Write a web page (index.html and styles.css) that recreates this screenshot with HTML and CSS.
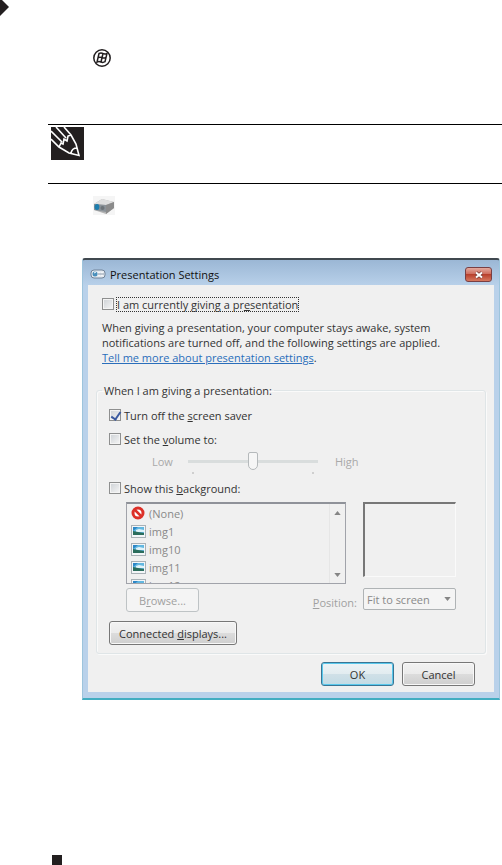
FILE: index.html
```html
<!DOCTYPE html>
<html lang="en">
<head>
    <meta charset="utf-8" />
    <title>Presentation Settings</title>
    <link rel="stylesheet" href="styles.css">
</head>
<body>
    <svg class="marker" viewBox="0 0 9 16"><path d="M0 0h2l7 7-9 9z" /></svg>

    <svg class="start_icon" viewBox="0 0 18 18">
        <circle cx="9" cy="9" r="8.2" />
        <path d="M6 4.500q2-1 4 0 2 .9 4-.2l-2 8.400q-2 1.200-4 .3-2-1-4 0zM10 4.500l-2 8.500M5 8.700q2-1 4 0 2 .9 4-.2" />
    </svg>

    <div class="note">
        <svg class="pencil" viewBox="0 0 33 33">
            <rect width="33" height="33" />
            <path d="M0 12L8 20 18 26 28 28.500 25 17 20 8 13 0M8 20L10 16 12 17 13 12 16 14 17 9 20 8M0 4L11 15M5 0L15 11M20 26q1-5 6-5" />
        </svg>
    </div>

    <svg class="projector" viewBox="0 0 22 19">
        <rect width="22" height="19" fill="#f5f5f5" />
        <path d="M1 8L9 3 21 6 21 12 13 18 1 14z" fill="#b4b4b4" />
        <path d="M1 8L9 3 21 6 13 9z" fill="#dedede" />
        <path d="M13 9L21 6V12L13 18z" fill="#8b8b8b" />
        <path d="M1 8L13 9V16L1 14z" fill="#8b9298" />
        <ellipse cx="4" cy="11" rx="2.400" ry="3" fill="#1d7eae" />
        <circle cx="9.500" cy="12" r="2" fill="#6c7378" />
    </svg>

    <form class="window" onsubmit="return false">
        <div class="titlebar">
            <svg class="title_icon" viewBox="0 0 16 11">
                <rect x="1" y="1" width="14" height="8" rx="3" fill="#e5eaf0" stroke="#718398" />
                <circle cx="5" cy="5" r="2.500" fill="#4a8fbb" />
                <path d="M4 4l2-1M9 3v4M12 3v4" stroke="#fff" />
                <path d="M8 5h6" stroke="#8a98a8" />
            </svg>
            <h1>Presentation Settings</h1>
            <button type="button" class="close" aria-label="Close">
                <svg viewBox="0 0 10 8"><path d="M2 1.500l6 5M8 1.500l-6 5" stroke="#763b38" stroke-width="3.500" /><path d="M2 1.500l6 5M8 1.500l-6 5" stroke="#fff" stroke-width="2" /></svg>
            </button>
        </div>

        <div class="content">
            <div class="check">
                <input type="checkbox" id="giving" />
                <label for="giving" class="focused">I am currently giving a pr<u>e</u>sentation</label>
            </div>
            <p class="info">When giving a presentation, your computer stays awake, system<br>
                notifications are turned off, and the following settings are applied.<br>
                <a href="#">Tell me more about presentation settings</a>.</p>

            <fieldset>
                <legend>When I am giving a presentation:</legend>
                <div class="check">
                    <input type="checkbox" id="saver" checked />
                    <label for="saver">Turn off the <u>s</u>creen saver</label>
                </div>
                <div class="check">
                    <input type="checkbox" id="set_volume" />
                    <label for="set_volume">Set the <u>v</u>olume to:</label>
                </div>
                <div class="volume">
                    <label for="volume">Low</label>
                    <div class="track">
                        <input type="range" id="volume" min="0" max="100" value="50" disabled />
                        <div class="ticks"><i></i><i></i></div>
                    </div>
                    <span>High</span>
                </div>
                <div class="check">
                    <input type="checkbox" id="background" />
                    <label for="background">Show this <u>b</u>ackground:</label>
                </div>

                <div class="background">
                    <div class="listbox">
                        <ul>
                            <li><svg viewBox="0 0 15 14"><circle cx="7" cy="7" r="5" fill="#fff" stroke="#dc3028" stroke-width="3" /><path d="M4 4l6 6" stroke="#dc3028" stroke-width="2.500" /></svg>(None)</li>
                            <li><svg viewBox="0 0 15 14"><use href="#picture" /></svg>img1</li>
                            <li><svg viewBox="0 0 15 14"><use href="#picture" /></svg>img10</li>
                            <li><svg viewBox="0 0 15 14"><use href="#picture" /></svg>img11</li>
                            <li><svg viewBox="0 0 15 14"><use href="#picture" /></svg>img12</li>
                        </ul>
                        <div class="scroll">
                            <button type="button" aria-label="Scroll up" disabled><svg viewBox="0 0 8 5"><path d="M4 0l4 5H0z" /></svg></button>
                            <button type="button" aria-label="Scroll down" disabled><svg viewBox="0 0 8 5"><path d="M4 5l4-5H0z" /></svg></button>
                        </div>
                    </div>
                    <div class="preview"></div>
                    <div class="options">
                        <button type="button" class="browse" disabled>B<u>r</u>owse...</button>
                        <label for="position"><u>P</u>osition:</label>
                    </div>
                    <div class="combo">
                        <select id="position" disabled>
                            <option>Fit to screen</option>
                        </select>
                        <svg viewBox="0 0 8 5"><path d="M4 5l4-5H0z" /></svg>
                    </div>
                </div>

                <button type="button" class="displays">Connected <u>d</u>isplays...</button>
            </fieldset>

            <div class="buttons">
                <button type="submit" class="ok">OK</button>
                <button type="button">Cancel</button>
            </div>
        </div>
    </form>

    <div class="page_mark"></div>

    <svg width="0" height="0" class="defs">
        <defs>
            <g id="picture">
                <rect x=".5" y="1.500" width="14" height="12" fill="#f3f6f8" stroke="#a9b1b6" />
                <rect x="2" y="3" width="11" height="8" fill="#62b7e0" />
                <path d="M2 3h5L2 7z" fill="#2c86c6" />
                <path d="M5 6l3-1 5 1v2H5z" fill="#e0f3fa" />
                <path d="M2 7l5 1 6 1v2H2z" fill="#2b6d5c" />
            </g>
        </defs>
    </svg>
</body>
</html>
```

FILE: styles.css
```css
* {
    box-sizing: border-box;
}

body {
    margin: 0;
    background: #fff;
    color: #333;
    font-family: "Open Sans", "Noto Sans", sans-serif;
    font-size: 11px;
    line-height: 15px;
}

svg {
    display: block;
    fill: none;
    flex: none;
}

button, select {
    font: inherit;
    color: inherit;
}

.marker {
    width: 9px;
    height: 16px;
    fill: #231f20;
}

.start_icon {
    width: 18px;
    height: 18px;
    margin: 33px 0 0 93px;
    stroke: #231f20;
    stroke-width: 1.5;
}

.note {
    height: 60px;
    margin: 57px 0 0 48px;
    padding: 2px 3px;
    border-top: 1px solid #000;
    border-bottom: 1px solid #000;
}

.pencil {
    width: 33px;
    height: 33px;
    stroke: #fff;
    stroke-width: 1.6;
}

    .pencil rect {
        fill: #231f20;
        stroke: none;
    }

.projector {
    width: 22px;
    height: 19px;
    margin: 12px 0 0 93px;
}

/* Окно */
.window {
    margin: 43px 2px 0 82px;
    padding: 0 5px 6px;
    border: 1px solid #9dc4dc;
    border-top: 2px solid #40484f;
    border-bottom: 2px solid #42adc1;
    border-radius: 3px 3px 0 0;
    background: linear-gradient(#9bb7d5, #b9d1ea 26px);
}

.titlebar {
    display: flex;
    align-items: center;
    height: 25px;
    padding: 4px 2px 0;
}

.title_icon {
    width: 16px;
    height: 11px;
    margin-right: 4px;
}

h1 {
    flex: 1;
    margin: 0;
    font-size: 11px;
    font-weight: normal;
    color: #111;
}

.close {
    display: flex;
    align-items: center;
    justify-content: center;
    width: 27px;
    height: 15px;
    padding: 0;
    border: 1px solid #793f43;
    border-radius: 3px;
    background: linear-gradient(#e3a99e, #cf6e5f 45%, #b8402d 50%, #d7785f);
}

    .close svg {
        width: 10px;
        height: 8px;
    }

.content {
    padding: 11px 8px 6px;
    background: #f0f0f0;
}

.check {
    display: flex;
    align-items: center;
    gap: 2px;
    height: 16px;
}

.content > .check {
    padding-left: 6px;
}

input[type="checkbox"] {
    appearance: none;
    width: 12px;
    height: 12px;
    margin: 0;
    border: 1px solid #8e8f8f;
    background: linear-gradient(135deg, #cdd1d5, #f6f6f6);
    box-shadow: inset 0 0 0 1px #f4f4f4;
}

    input[type="checkbox"]:checked::before {
        content: "";
        display: block;
        width: 4px;
        height: 8px;
        margin: 0 0 0 3px;
        border: solid #3b5aa0;
        border-width: 0 2px 2px 0;
        transform: rotate(35deg);
    }

.check label {
    padding: 0 1px;
}

.check .focused {
    padding: 0;
    border: 1px dotted #333;
    line-height: 13px;
}

.info {
    margin: 8px 6px 0;
    white-space: nowrap;
}

    .info a {
        color: #2a6ebb;
    }

fieldset {
    min-width: 0;
    margin: 18px 0 0;
    padding: 9px 12px 8px;
    border: 1px solid #dfe5e7;
    border-radius: 3px;
    box-shadow: inset 1px 1px #fafafa, 1px 1px #fafafa;
}

legend {
    margin-left: -7px;
    padding: 0 2px;
}

fieldset .check + .check {
    margin-top: 8px;
}

.volume {
    display: flex;
    margin: 7px 0 6px 43px;
    color: #a9a9a9;
}

.track {
    width: 130px;
    margin: 0 17px 0 15px;
}

input[type="range"] {
    appearance: none;
    display: block;
    width: 100%;
    height: 18px;
    margin: -2px 0 0;
    background: linear-gradient(#d9dddd, #d9dddd) center / 100% 3px no-repeat;
}

    input[type="range"]::-webkit-slider-thumb {
        appearance: none;
        width: 10px;
        height: 18px;
        border: 1px solid #b5b9bb;
        border-radius: 2px 2px 5px 5px;
        background: #f6f6f6;
    }

.ticks {
    display: flex;
    justify-content: space-between;
    padding: 2px 4px 0;
}

    .ticks i {
        width: 2px;
        height: 2px;
        background: #cfcfcf;
    }

.background {
    display: grid;
    grid-template-columns: 220px 93px;
    column-gap: 17px;
    row-gap: 4px;
    margin: 6px 0 0 17px;
    color: #898989;
}

.listbox {
    display: flex;
    height: 82px;
    border: 1px solid #a1a3aa;
    border-top: 2px solid #8f9299;
    overflow: hidden;
}

    .listbox ul {
        flex: 1;
        margin: 0;
        padding: 0 4px;
        list-style: none;
    }

    .listbox li {
        display: flex;
        align-items: center;
        gap: 3px;
        height: 18px;
    }

        .listbox li svg {
            width: 15px;
            height: 14px;
        }

.scroll {
    display: flex;
    flex-direction: column;
    justify-content: space-between;
    width: 16px;
    border-left: 1px solid #e6e6e6;
}

    .scroll button {
        display: flex;
        align-items: center;
        justify-content: center;
        height: 17px;
        padding: 0;
        border: none;
        background: none;
    }

    .scroll svg, .combo svg {
        width: 7px;
        height: 4px;
        fill: #858585;
    }

.preview {
    height: 75px;
    border: 1px solid #fafafa;
    border-top: 2px solid #777;
    border-left: 2px solid #777;
}

.options {
    display: flex;
    align-items: center;
    justify-content: space-between;
    padding-right: 6px;
    margin-right: -17px;
    color: #a0a0a0;
}

    .options label {
        padding-top: 4px;
    }

.content .browse {
    width: 73px;
    border-color: #bec3c5;
    background: #f4f4f4;
    box-shadow: none;
}

.combo {
    position: relative;
}

    .combo select {
        appearance: none;
        display: block;
        width: 100%;
        height: 22px;
        padding: 0 3px;
        border: 1px solid #afb3b5;
        border-radius: 2px;
        background: #f4f4f4;
        opacity: 1;
    }

    .combo svg {
        position: absolute;
        right: 5px;
        top: 9px;
        pointer-events: none;
    }

.browse, .displays, .buttons button {
    height: 24px;
    padding: 0;
    border: 1px solid #777;
    border-radius: 3px;
    background: linear-gradient(#f2f2f2, #ebebeb 50%, #dcdcdc 51%, #cfcfcf);
    box-shadow: inset 0 0 0 1px #f8f8f8;
}

.displays {
    display: block;
    width: 128px;
    margin-top: 9px;
}

.buttons {
    display: flex;
    justify-content: flex-end;
    gap: 8px;
    padding: 8px 11px 0 0;
}

    .buttons button {
        width: 73px;
    }

    .buttons .ok {
        border-color: #3a7594;
        background: linear-gradient(#edf3f6, #e2ecf0 50%, #d0e0e7 51%, #c2dbe5);
        box-shadow: inset 0 0 0 1px #59c8ec;
    }

.page_mark {
    width: 10px;
    height: 10px;
    margin: 155px 0 0 52px;
    background: #231f20;
}

.defs {
    position: absolute;
}
```
